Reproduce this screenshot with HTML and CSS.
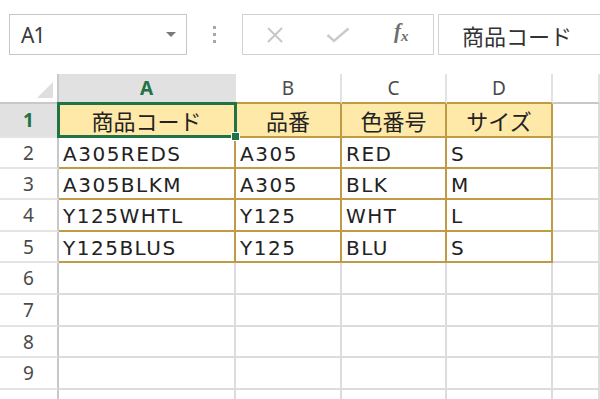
FILE: index.html
```html
<!DOCTYPE html>
<html lang="ja">
<head>
    <meta charset="UTF-8">
    <title>商品コード</title>
    <link rel="stylesheet" href="styles.css">
</head>
<body>
    <div class="toolbar">
        <div class="name-box">
            <span class="name">A1</span>
            <span class="caret"></span>
        </div>
        <div class="grip"><i></i><i></i><i></i></div>
        <div class="fx-buttons">
            <span class="btn">
                <svg width="18" height="16" viewBox="0 0 18 16"><path d="M2 1 L16 15 M16 1 L2 15" stroke="#c6c6c6" stroke-width="1.8" fill="none"/></svg>
            </span>
            <span class="btn">
                <svg width="24" height="16" viewBox="0 0 24 16"><path d="M1.5 8 L8 14 L22.5 1.5" stroke="#cacaca" stroke-width="2.4" fill="none"/></svg>
            </span>
            <span class="btn"><span class="fx">f<sub>x</sub></span></span>
        </div>
        <div class="formula">商品コード</div>
    </div>

    <div class="sheet">
        <div class="corner"><span class="tri"></span></div>
        <div class="col-head active edge">A</div>
        <div class="col-head edge">B</div>
        <div class="col-head edge">C</div>
        <div class="col-head edge">D</div>
        <div class="col-head"></div>

        <div class="row-head active">1</div>
        <div class="cell th">商品コード</div>
        <div class="cell th">品番</div>
        <div class="cell th">色番号</div>
        <div class="cell th">サイズ</div>
        <div class="cell"></div>

        <div class="row-head">2</div>
        <div class="cell t">A305REDS</div>
        <div class="cell t">A305</div>
        <div class="cell t">RED</div>
        <div class="cell t">S</div>
        <div class="cell"></div>

        <div class="row-head">3</div>
        <div class="cell t">A305BLKM</div>
        <div class="cell t">A305</div>
        <div class="cell t">BLK</div>
        <div class="cell t">M</div>
        <div class="cell"></div>

        <div class="row-head">4</div>
        <div class="cell t">Y125WHTL</div>
        <div class="cell t">Y125</div>
        <div class="cell t">WHT</div>
        <div class="cell t">L</div>
        <div class="cell"></div>

        <div class="row-head">5</div>
        <div class="cell t">Y125BLUS</div>
        <div class="cell t">Y125</div>
        <div class="cell t">BLU</div>
        <div class="cell t">S</div>
        <div class="cell"></div>

        <div class="row-head">6</div>
        <div class="cell"></div><div class="cell"></div><div class="cell"></div><div class="cell"></div><div class="cell"></div>
        <div class="row-head">7</div>
        <div class="cell"></div><div class="cell"></div><div class="cell"></div><div class="cell"></div><div class="cell"></div>
        <div class="row-head">8</div>
        <div class="cell"></div><div class="cell"></div><div class="cell"></div><div class="cell"></div><div class="cell"></div>
        <div class="row-head">9</div>
        <div class="cell"></div><div class="cell"></div><div class="cell"></div><div class="cell"></div><div class="cell"></div>
        <div class="row-head"></div>
        <div class="cell"></div><div class="cell"></div><div class="cell"></div><div class="cell"></div><div class="cell"></div>

        <!-- アクティブセル A1 -->
        <div class="selection"><span class="handle"></span></div>
    </div>
</body>
</html>
```

FILE: styles.css
```css
* {
    margin: 0;
    padding: 0;
    box-sizing: border-box;
}

html, body {
    width: 600px;
    height: 399px;
    overflow: hidden;
    background: #fff;
    font-family: "Noto Sans", "Noto Sans CJK JP", sans-serif;
}

/* 数式バー */
.toolbar {
    display: flex;
    height: 55px;
    padding: 14px 0 0 9px;
}

.name-box {
    width: 178px;
    height: 41px;
    border: 1px solid #c6c6c6;
    display: flex;
    align-items: center;
    justify-content: space-between;
    padding: 0 10px 0 11px;
}

.name {
    font-size: 21px;
    letter-spacing: -1px;
    color: #3a3a3a;
}

.caret {
    width: 0;
    height: 0;
    border-left: 5px solid transparent;
    border-right: 5px solid transparent;
    border-top: 5px solid #7a7a7a;
}

.grip {
    width: 55px;
    display: flex;
    flex-direction: column;
    align-items: center;
    justify-content: center;
    gap: 4px;
}

.grip i {
    width: 3px;
    height: 3px;
    background: #a8a8a8;
}

.fx-buttons {
    width: 192px;
    height: 41px;
    border: 1px solid #d2d2d2;
    display: flex;
}

.btn {
    flex: 1;
    display: flex;
    align-items: center;
    justify-content: center;
}

.fx {
    font-family: "Liberation Serif", serif;
    font-style: italic;
    font-weight: bold;
    font-size: 21px;
    line-height: 1;
    color: #6e6e6e;
    padding-bottom: 4px;
}

.fx sub {
    font-size: 15px;
    vertical-align: -3px;
}

.formula {
    flex: 1;
    height: 41px;
    margin-left: 4px;
    margin-right: -4px;
    border: 1px solid #d2d2d2;
    padding-left: 23px;
    display: flex;
    align-items: center;
    font-family: "Noto Sans CJK JP", sans-serif;
    font-size: 22px;
    color: #333;
}

/* シート */
.sheet {
    position: relative;
    margin-top: 19px;
    display: grid;
    grid-template-columns: 59px 177px 106px 105px 106px 1fr;
    grid-template-rows: 30px 34px 31px 31px 32px 31px 32px 32px 31px 32px 31px;
}

.sheet > div {
    border-right: 2px solid #dcdcdc;
    border-bottom: 2px solid #dcdcdc;
}

.corner {
    position: relative;
    border-color: #c8c8c8 !important;
}

.corner .tri {
    position: absolute;
    right: 4px;
    bottom: 4px;
    width: 0;
    height: 0;
    border-left: 16px solid transparent;
    border-bottom: 16px solid #dedede;
}

.col-head {
    display: flex;
    align-items: center;
    justify-content: center;
    font-size: 19px;
    color: #4a4a4a;
    border-right-color: #e2e2e2 !important;
    border-bottom-color: #c8c8c8 !important;
}

.col-head.edge {
    border-bottom-color: #bf9b45 !important;
}

.row-head {
    display: flex;
    align-items: center;
    justify-content: center;
    font-size: 19px;
    color: #4a4a4a;
    border-right-color: #c8c8c8 !important;
    border-bottom-color: #e4e4e4 !important;
}

.active {
    background: #e1e1e1;
    color: #217346;
    font-weight: bold;
}

.cell {
    display: flex;
    align-items: center;
    padding-left: 4px;
    color: #222;
}

.t {
    font-family: "DejaVu Sans", sans-serif;
    font-size: 20px;
    letter-spacing: 1.5px;
    padding-top: 2px;
    border-color: #bf9b45 !important;
}

.th {
    justify-content: center;
    padding-left: 0;
    background: #ffe9a8;
    font-family: "Noto Sans CJK JP", sans-serif;
    font-size: 22px;
    border-color: #bf9b45 !important;
}

.selection {
    position: absolute;
    left: 57px;
    top: 28px;
    width: 180px;
    height: 36px;
    border: 3px solid #217346 !important;
}

.handle {
    position: absolute;
    right: -6px;
    bottom: -6px;
    width: 9px;
    height: 9px;
    background: #217346;
    border: 1px solid #fff;
}
```
